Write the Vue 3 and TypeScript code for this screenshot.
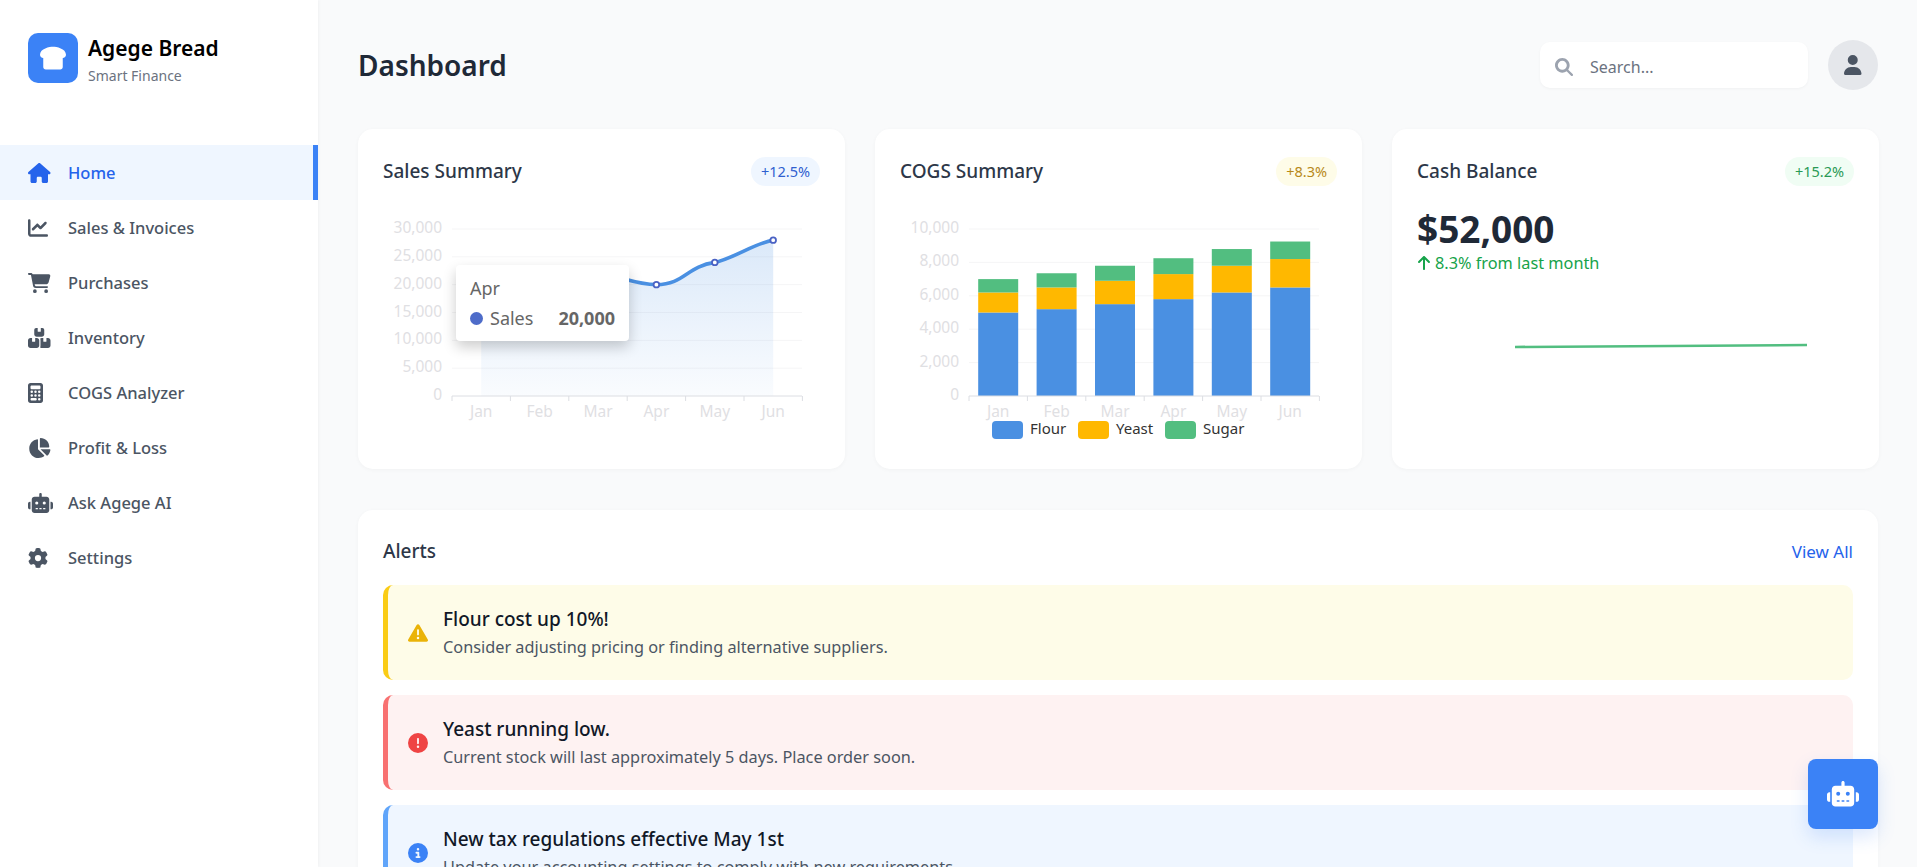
<script setup lang="ts">
const icons: Record<string, { w: number; d: string }> = {
  house: { w: 576, d: 'M575.8 255.5c0 18-15 32.1-32 32.1h-32l.7 160.2c0 2.7-.2 5.4-.5 8.1V472c0 22.1-17.9 40-40 40H456c-1.1 0-2.2 0-3.3-.1c-1.4 .1-2.8 .1-4.2 .1H416 392c-22.1 0-40-17.9-40-40V448 384c0-17.7-14.3-32-32-32H256c-17.7 0-32 14.3-32 32v64 24c0 22.1-17.9 40-40 40H160 128.1c-1.5 0-3-.1-4.5-.2c-1.2 .1-2.4 .2-3.6 .2H104c-22.1 0-40-17.9-40-40V360c0-.9 0-1.9 .1-2.8V287.6H32c-18 0-32-14-32-32.1c0-9 3-17 10-24L266.4 8c7-7 15-8 22-8s15 2 21 7L564.8 231.5c8 7 12 15 11 24z' },
  line: { w: 512, d: 'M64 64c0-17.7-14.3-32-32-32S0 46.3 0 64V400c0 44.2 35.8 80 80 80H480c17.7 0 32-14.3 32-32s-14.3-32-32-32H80c-8.8 0-16-7.2-16-16V64zm406.6 86.6c12.5-12.5 12.5-32.8 0-45.3s-32.8-12.5-45.3 0L320 210.7l-57.4-57.4c-12.5-12.5-32.8-12.5-45.3 0l-112 112c-12.5 12.5-12.5 32.8 0 45.3s32.8 12.5 45.3 0L240 221.3l57.4 57.4c12.5 12.5 32.8 12.5 45.3 0l128-128z' },
  cart: { w: 576, d: 'M0 24C0 10.7 10.7 0 24 0H69.5c22 0 41.5 12.8 50.6 32h411c26.3 0 45.5 25 38.6 50.4l-41 152.3c-8.5 31.4-37 53.3-69.5 53.3H170.7l5.4 28.5c2.2 11.3 12.1 19.5 23.6 19.5H488c13.3 0 24 10.7 24 24s-10.7 24-24 24H199.7c-34.6 0-64.3-24.6-70.7-58.5L77.4 54.5c-.7-3.8-4-6.5-7.9-6.5H24C10.7 48 0 37.3 0 24zM128 464a48 48 0 1 1 96 0 48 48 0 1 1 -96 0zm336-48a48 48 0 1 1 0 96 48 48 0 1 1 0-96z' },
  boxes: { w: 576, d: 'M248 0H208c-26.5 0-48 21.5-48 48V160c0 35.3 28.7 64 64 64H352c35.3 0 64-28.7 64-64V48c0-26.5-21.5-48-48-48H328V80c0 8.8-7.2 16-16 16H264c-8.8 0-16-7.2-16-16V0zM64 256c-35.3 0-64 28.7-64 64V448c0 35.3 28.7 64 64 64H224c35.3 0 64-28.7 64-64V320c0-35.3-28.7-64-64-64H184v80c0 8.8-7.2 16-16 16H120c-8.8 0-16-7.2-16-16V256H64zM352 512H512c35.3 0 64-28.7 64-64V320c0-35.3-28.7-64-64-64H472v80c0 8.8-7.2 16-16 16H408c-8.8 0-16-7.2-16-16V256H352c-15 0-28.8 5.1-39.7 13.8c4.9 15.4 7.7 31.9 7.7 50.2V448c0 18.3-2.8 34.8-7.7 50.2C323.2 506.9 337 512 352 512z' },
  calc: { w: 384, d: 'M64 0C28.7 0 0 28.7 0 64V448c0 35.3 28.7 64 64 64H320c35.3 0 64-28.7 64-64V64c0-35.3-28.7-64-64-64H64zM96 64H288c17.7 0 32 14.3 32 32v32c0 17.7-14.3 32-32 32H96c-17.7 0-32-14.3-32-32V96c0-17.7 14.3-32 32-32zm32 160a32 32 0 1 1 -64 0 32 32 0 1 1 64 0zM96 352a32 32 0 1 1 0-64 32 32 0 1 1 0 64zM64 416c0-17.7 14.3-32 32-32h96c17.7 0 32 14.3 32 32s-14.3 32-32 32H96c-17.7 0-32-14.3-32-32zM192 256a32 32 0 1 1 0-64 32 32 0 1 1 0 64zm32 64a32 32 0 1 1 -64 0 32 32 0 1 1 64 0zm64-64a32 32 0 1 1 0-64 32 32 0 1 1 0 64zm32 64a32 32 0 1 1 -64 0 32 32 0 1 1 64 0zM288 448a32 32 0 1 1 0-64 32 32 0 1 1 0 64z' },
  pie: { w: 576, d: 'M304 240V16.6c0-9 7-16.6 16-16.6C443.7 0 544 100.3 544 224c0 9-7.6 16-16.6 16H304zM32 272C32 150.7 122.1 50.3 239 34.3c9.2-1.3 17 6.1 17 15.4V288L412.5 444.5c6.7 6.7 6.2 17.7-1.5 23.1C371.8 495.6 323.8 512 272 512C139.5 512 32 404.6 32 272zm526.4 16c9.3 0 16.6 7.8 15.4 17c-7.7 55.9-34.6 105.6-73.9 142.3c-6 5.6-15.4 5.2-21.2-.7L320 288H558.4z' },
  robot: { w: 640, d: 'M320 0c17.7 0 32 14.3 32 32V96H472c39.8 0 72 32.2 72 72V440c0 39.8-32.2 72-72 72H168c-39.8 0-72-32.2-72-72V168c0-39.8 32.2-72 72-72H288V32c0-17.7 14.3-32 32-32zM208 384c-8.8 0-16 7.2-16 16s7.2 16 16 16h32c8.8 0 16-7.2 16-16s-7.2-16-16-16H208zm96 0c-8.8 0-16 7.2-16 16s7.2 16 16 16h32c8.8 0 16-7.2 16-16s-7.2-16-16-16H304zm96 0c-8.8 0-16 7.2-16 16s7.2 16 16 16h32c8.8 0 16-7.2 16-16s-7.2-16-16-16H400zM264 256a40 40 0 1 0 -80 0 40 40 0 1 0 80 0zm152 40a40 40 0 1 0 0-80 40 40 0 1 0 0 80zM48 224H64V416H48c-26.5 0-48-21.5-48-48V272c0-26.5 21.5-48 48-48zm544 0c26.5 0 48 21.5 48 48v96c0 26.5-21.5 48-48 48H576V224h16z' },
  gear: { w: 512, d: 'M495.9 166.6c3.2 8.7 .5 18.4-6.4 24.6l-43.3 39.4c1.1 8.3 1.7 16.8 1.7 25.4s-.6 17.1-1.7 25.4l43.3 39.4c6.9 6.2 9.6 15.9 6.4 24.6c-4.4 11.9-9.7 23.3-15.8 34.3l-4.7 8.1c-6.6 11-14 21.4-22.1 31.2c-5.9 7.2-15.7 9.6-24.5 6.8l-55.7-17.7c-13.4 10.3-28.2 18.9-44 25.4l-12.5 57.1c-2 9.1-9 16.3-18.2 17.8c-13.8 2.3-28 3.5-42.5 3.5s-28.7-1.2-42.5-3.5c-9.2-1.5-16.2-8.7-18.2-17.8l-12.5-57.1c-15.8-6.5-30.6-15.1-44-25.4L83.1 425.9c-8.8 2.8-18.6 .3-24.5-6.8c-8.1-9.8-15.5-20.2-22.1-31.2l-4.7-8.1c-6.1-11-11.4-22.4-15.8-34.3c-3.2-8.7-.5-18.4 6.4-24.6l43.3-39.4C64.6 273.1 64 264.6 64 256s.6-17.1 1.7-25.4L22.4 191.2c-6.9-6.2-9.6-15.9-6.4-24.6c4.4-11.9 9.7-23.3 15.8-34.3l4.7-8.1c6.6-11 14-21.4 22.1-31.2c5.9-7.2 15.7-9.6 24.5-6.8l55.7 17.7c13.4-10.3 28.2-18.9 44-25.4l12.5-57.1c2-9.1 9-16.3 18.2-17.8C227.3 1.2 241.5 0 256 0s28.7 1.2 42.5 3.5c9.2 1.5 16.2 8.7 18.2 17.8l12.5 57.1c15.8 6.5 30.6 15.1 44 25.4l55.7-17.7c8.8-2.8 18.6-.3 24.5 6.8c8.1 9.8 15.5 20.2 22.1 31.2l4.7 8.1c6.1 11 11.4 22.4 15.8 34.3zM256 336a80 80 0 1 0 0-160 80 80 0 1 0 0 160z' },
  search: { w: 512, d: 'M416 208c0 45.9-14.9 88.3-40 122.7L502.6 457.4c12.5 12.5 12.5 32.8 0 45.3s-32.8 12.5-45.3 0L330.7 376c-34.4 25.2-76.8 40-122.7 40C93.1 416 0 322.9 0 208S93.1 0 208 0S416 93.1 416 208zM208 336a128 128 0 1 0 0-256 128 128 0 1 0 0 256z' },
  user: { w: 448, d: 'M224 256A128 128 0 1 0 224 0a128 128 0 1 0 0 256zm-45.7 48C79.8 304 0 383.8 0 482.3C0 498.7 13.3 512 29.7 512H418.3c16.4 0 29.7-13.3 29.7-29.7C448 383.8 368.2 304 269.7 304H178.3z' },
  warn: { w: 512, d: 'M256 32c14.2 0 27.3 7.5 34.5 19.8l216 368c7.3 12.4 7.3 27.7 .2 40.1S486.3 480 472 480H40c-14.3 0-27.6-7.7-34.7-20.1s-7-27.8 .2-40.1l216-368C228.7 39.5 241.8 32 256 32zm0 128c-13.3 0-24 10.7-24 24V296c0 13.3 10.7 24 24 24s24-10.7 24-24V184c0-13.3-10.7-24-24-24zm32 224a32 32 0 1 0 -64 0 32 32 0 1 0 64 0z' },
  error: { w: 512, d: 'M256 512A256 256 0 1 0 256 0a256 256 0 1 0 0 512zm0-384c13.3 0 24 10.7 24 24V264c0 13.3-10.7 24-24 24s-24-10.7-24-24V152c0-13.3 10.7-24 24-24zM224 352a32 32 0 1 1 64 0 32 32 0 1 1 -64 0z' },
  info: { w: 512, d: 'M256 512A256 256 0 1 0 256 0a256 256 0 1 0 0 512zM216 336h24V272H216c-13.3 0-24-10.7-24-24s10.7-24 24-24h48c13.3 0 24 10.7 24 24v88h8c13.3 0 24 10.7 24 24s-10.7 24-24 24H216c-13.3 0-24-10.7-24-24s10.7-24 24-24zm40-208a32 32 0 1 1 0 64 32 32 0 1 1 0-64z' },
  up: { w: 384, d: 'M214.6 41.4c-12.5-12.5-32.8-12.5-45.3 0l-160 160c-12.5 12.5-12.5 32.8 0 45.3s32.8 12.5 45.3 0L160 141.2V448c0 17.7 14.3 32 32 32s32-14.3 32-32V141.2L329.4 246.6c12.5 12.5 32.8 12.5 45.3 0s12.5-32.8 0-45.3l-160-160z' },
  bread: { w: 512, d: 'M256 32C192 32 0 64 0 192c0 35.3 28.7 64 64 64V432c0 26.5 21.5 48 48 48H400c26.5 0 48-21.5 48-48V256c35.3 0 64-28.7 64-64C512 64 320 32 256 32z' }
}

const nav = [
  { label: 'Home', icon: 'house', active: true },
  { label: 'Sales & Invoices', icon: 'line' },
  { label: 'Purchases', icon: 'cart' },
  { label: 'Inventory', icon: 'boxes' },
  { label: 'COGS Analyzer', icon: 'calc' },
  { label: 'Profit & Loss', icon: 'pie' },
  { label: 'Ask Agege AI', icon: 'robot' },
  { label: 'Settings', icon: 'gear' }
]

const months = ['Jan', 'Feb', 'Mar', 'Apr', 'May', 'Jun']
const AXIS_BOTTOM = 196
const AXIS_HEIGHT = 167
const LEFT = 69
const STEP = 58.4
const yOf = (v: number, max: number) => AXIS_BOTTOM - (v / max) * AXIS_HEIGHT
const cx = (i: number) => LEFT + STEP * (i + 0.5)

const salesTicks = [0, 5000, 10000, 15000, 20000, 25000, 30000]
const cogsTicks = [0, 2000, 4000, 6000, 8000, 10000]
const ticksX = [0, 1, 2, 3, 4, 5, 6].map((i) => LEFT + STEP * i)

const salesValues = [15000, 18000, 22000, 20000, 24000, 28000]
const salesPoints = salesValues.slice(3).map((v, i) => ({ x: cx(i + 3), y: yOf(v, 30000) }))
const linePath =
  `M${cx(0)} ${yOf(15000, 30000)} C${cx(0) + 20} ${yOf(16000, 30000)} ${cx(1) - 20} ${yOf(17000, 30000)} ${cx(1)} ${yOf(18000, 30000)}` +
  ` S${cx(2) - 20} ${yOf(22000, 30000)} ${cx(2)} ${yOf(22000, 30000)}` +
  ` C${cx(2) + 20} ${yOf(21700, 30000)} ${cx(3) - 22} ${yOf(20000, 30000)} ${cx(3)} ${yOf(20000, 30000)}` +
  ` C${cx(3) + 28} ${yOf(20000, 30000)} ${cx(4) - 28} ${yOf(23300, 30000)} ${cx(4)} ${yOf(24000, 30000)}` +
  ` C${cx(4) + 20} ${yOf(24800, 30000)} ${cx(5) - 20} ${yOf(27300, 30000)} ${cx(5)} ${yOf(28000, 30000)}`
const areaPath = `${linePath} L${cx(5)} ${AXIS_BOTTOM} L${cx(0)} ${AXIS_BOTTOM} Z`

const cogs = [
  [5000, 1200, 800],
  [5200, 1300, 850],
  [5500, 1400, 900],
  [5800, 1500, 950],
  [6200, 1600, 1000],
  [6500, 1700, 1050]
]
const cogsColors = ['#4a90e2', '#ffb800', '#52be80']
const cogsBars = cogs.flatMap((row, i) => {
  let acc = 0
  return row.map((v, s) => {
    const y = yOf(acc + v, 10000)
    const h = (v / 10000) * AXIS_HEIGHT
    acc += v
    return { x: cx(i) - 20, y, h, fill: cogsColors[s] }
  })
})
const legend = [
  { label: 'Flour', sx: 92, tx: 130, fill: '#4a90e2' },
  { label: 'Yeast', sx: 178, tx: 216, fill: '#ffb800' },
  { label: 'Sugar', sx: 265, tx: 303, fill: '#52be80' }
]

const alerts = [
  { kind: 'warning', icon: 'warn', title: 'Flour cost up 10%!', text: 'Consider adjusting pricing or finding alternative suppliers.' },
  { kind: 'danger', icon: 'error', title: 'Yeast running low.', text: 'Current stock will last approximately 5 days. Place order soon.' },
  { kind: 'notice', icon: 'info', title: 'New tax regulations effective May 1st', text: 'Update your accounting settings to comply with new requirements.' }
]
</script>

<template>
  <div class="app">
    <aside class="sidebar">
      <div class="brand">
        <div class="logo">
          <svg class="bread" :viewBox="`0 0 ${icons.bread.w} 512`"><path :d="icons.bread.d" /></svg>
        </div>
        <div class="brand-text">
          <div class="brand-name">Agege Bread</div>
          <div class="brand-sub">Smart Finance</div>
        </div>
      </div>
      <nav class="nav">
        <a v-for="item in nav" :key="item.label" class="nav-item" :class="{ active: item.active }">
          <span class="nav-icon">
            <svg class="icon" :viewBox="`0 0 ${icons[item.icon].w} 512`" :width="(icons[item.icon].w / 512) * 20" height="20"><path :d="icons[item.icon].d" /></svg>
          </span>
          <span>{{ item.label }}</span>
        </a>
      </nav>
    </aside>

    <main class="main">
      <header class="topbar">
        <h1>Dashboard</h1>
        <div class="top-actions">
          <label class="search">
            <svg class="icon search-icon" viewBox="0 0 512 512" width="18" height="18"><path :d="icons.search.d" /></svg>
            <input type="text" placeholder="Search..." />
          </label>
          <div class="avatar">
            <svg class="icon" viewBox="0 0 448 512" width="17.5" height="20"><path :d="icons.user.d" /></svg>
          </div>
        </div>
      </header>

      <section class="cards">
        <article class="card">
          <div class="card-head">
            <h2>Sales Summary</h2>
            <span class="badge blue">+12.5%</span>
          </div>
          <div class="chart">
            <svg viewBox="0 0 437 244" width="437" height="244">
              <defs>
                <linearGradient id="areaFill" x1="0" y1="0" x2="0" y2="1">
                  <stop offset="0" stop-color="#4a90e2" stop-opacity="0.2" />
                  <stop offset="1" stop-color="#4a90e2" stop-opacity="0.03" />
                </linearGradient>
              </defs>
              <g v-for="t in salesTicks" :key="t">
                <line v-if="t" :x1="LEFT" :x2="LEFT + 350" :y1="yOf(t, 30000)" :y2="yOf(t, 30000)" class="grid" />
                <text :x="59" :y="yOf(t, 30000) + 4" class="tick" text-anchor="end">{{ t.toLocaleString('en-US') }}</text>
              </g>
              <path :d="areaPath" fill="url(#areaFill)" />
              <line :x1="LEFT" :x2="LEFT + 350" :y1="AXIS_BOTTOM" :y2="AXIS_BOTTOM" class="axis" />
              <line v-for="x in ticksX" :key="x" :x1="x" :x2="x" :y1="AXIS_BOTTOM" :y2="AXIS_BOTTOM + 5" class="axis" />
              <text v-for="(m, i) in months" :key="m" :x="cx(i)" y="217" class="tick" text-anchor="middle">{{ m }}</text>
              <path :d="linePath" fill="none" stroke="#4a90e2" stroke-width="3.6" />
              <circle v-for="p in salesPoints" :key="p.x" :cx="p.x" :cy="p.y" r="2.8" fill="#fff" stroke="#4a62c4" stroke-width="1.8" />
            </svg>
            <div class="tooltip">
              <div class="tip-title">Apr</div>
              <div class="tip-row">
                <i class="tip-dot"></i>
                <span class="tip-name">Sales</span>
                <b>20,000</b>
              </div>
            </div>
          </div>
        </article>

        <article class="card">
          <div class="card-head">
            <h2>COGS Summary</h2>
            <span class="badge amber">+8.3%</span>
          </div>
          <div class="chart">
            <svg viewBox="0 0 437 244" width="437" height="244">
              <g v-for="t in cogsTicks" :key="t">
                <line v-if="t" :x1="LEFT" :x2="LEFT + 350" :y1="yOf(t, 10000)" :y2="yOf(t, 10000)" class="grid" />
                <text :x="59" :y="yOf(t, 10000) + 4" class="tick" text-anchor="end">{{ t.toLocaleString('en-US') }}</text>
              </g>
              <rect v-for="(b, i) in cogsBars" :key="i" :x="b.x" :y="b.y" width="40" :height="b.h" :fill="b.fill" />
              <line :x1="LEFT" :x2="LEFT + 350" :y1="AXIS_BOTTOM" :y2="AXIS_BOTTOM" class="axis" />
              <line v-for="x in ticksX" :key="x" :x1="x" :x2="x" :y1="AXIS_BOTTOM" :y2="AXIS_BOTTOM + 5" class="axis" />
              <text v-for="(m, i) in months" :key="m" :x="cx(i)" y="217" class="tick" text-anchor="middle">{{ m }}</text>
              <g v-for="l in legend" :key="l.label">
                <rect :x="l.sx" y="221" width="31" height="18" rx="4" :fill="l.fill" />
                <text :x="l.tx" y="234" class="legend">{{ l.label }}</text>
              </g>
            </svg>
          </div>
        </article>

        <article class="card">
          <div class="card-head">
            <h2>Cash Balance</h2>
            <span class="badge green">+15.2%</span>
          </div>
          <div class="cash-value">$52,000</div>
          <div class="cash-delta">
            <svg class="icon" viewBox="0 0 384 512" width="14" height="16"><path :d="icons.up.d" /></svg>
            <span>8.3% from last month</span>
          </div>
          <svg class="spark" viewBox="0 0 437 12" width="437" height="12">
            <line x1="98" y1="7" x2="390" y2="5" stroke="#52be80" stroke-width="2.6" />
          </svg>
        </article>
      </section>

      <section class="alerts-card">
        <div class="alerts-head">
          <h2>Alerts</h2>
          <a class="view-all">View All</a>
        </div>
        <div class="alert-list">
          <div v-for="a in alerts" :key="a.title" class="alert" :class="a.kind">
            <svg class="icon alert-icon" viewBox="0 0 512 512" width="20" height="20"><path :d="icons[a.icon].d" /></svg>
            <div>
              <div class="alert-title">{{ a.title }}</div>
              <div class="alert-text">{{ a.text }}</div>
            </div>
          </div>
        </div>
      </section>
    </main>

    <button class="fab" aria-label="Ask Agege AI">
      <svg class="icon" viewBox="0 0 640 512" width="32" height="25.6"><path :d="icons.robot.d" /></svg>
    </button>
  </div>
</template>

<style>
html, body { margin: 0; height: 100%; overflow: hidden; background: #f9fafb; }
</style>

<style scoped>
* { box-sizing: border-box; }
.app {
  display: flex;
  height: 867px;
  overflow: hidden;
  background: #f9fafb;
  font-family: "Noto Sans", "Open Sans", sans-serif;
  color: #1f2937;
}
.icon { fill: currentColor; display: block; }

.sidebar {
  flex: 0 0 318px;
  background: #fff;
  box-shadow: 1px 0 3px rgba(0, 0, 0, 0.04);
  padding-top: 33px;
  z-index: 1;
}
.brand { display: flex; align-items: center; gap: 10px; padding-left: 28px; height: 50px; }
.logo {
  width: 50px; height: 50px; border-radius: 10px; background: #3b82f6;
  display: flex; align-items: center; justify-content: center; color: #fff;
}
.bread { width: 26px; height: 26px; fill: #fff; }
.brand-text { margin-top: 6px; }
.brand-name { font-size: 21px; font-weight: 600; color: #000; line-height: 30px; }
.brand-sub { font-size: 14px; color: #6b7280; line-height: 26px; }
.nav { margin-top: 62px; }
.nav-item {
  display: flex; align-items: center; height: 55px; padding-left: 28px;
  font-size: 16.5px; font-weight: 500; color: #4b5563;
}
.nav-icon { width: 40px; flex: none; }
.nav-item.active { background: #eff6ff; color: #2563eb; border-right: 5px solid #3b82f6; }

.main { flex: 1; min-width: 0; padding: 40px 39px 0 40px; overflow: hidden; }
.topbar { display: flex; align-items: center; justify-content: space-between; height: 50px; margin-bottom: 39px; }
h1 { margin: 0; font-size: 28px; font-weight: 600; color: #1f2937; }
.top-actions { display: flex; align-items: center; gap: 20px; }
.search {
  display: flex; align-items: center; gap: 17px; width: 268px; height: 46px; padding: 3px 0 0 15px;
  background: #fff; border-radius: 10px; box-shadow: 0 1px 3px rgba(0, 0, 0, 0.04); color: #9ca3af;
}
.search input {
  border: 0; outline: 0; background: transparent; flex: 1; min-width: 0;
  font: 16px "Noto Sans", sans-serif; color: #374151; padding: 0;
}
.search input::placeholder { color: #6b7280; opacity: 1; }
.avatar {
  width: 50px; height: 50px; border-radius: 50%; background: #e5e7eb; color: #4b5563;
  display: flex; align-items: center; justify-content: center;
}

.cards { display: grid; grid-template-columns: repeat(3, 1fr); gap: 30px; margin-bottom: 41px; }
.card, .alerts-card {
  background: #fff; border-radius: 15px; box-shadow: 0 1px 4px rgba(0, 0, 0, 0.035); padding: 25px;
}
.card { height: 340px; }
.card-head { display: flex; align-items: center; justify-content: space-between; height: 34px; }
h2 { margin: 0; font-size: 19px; font-weight: 500; color: #2d3748; }
.badge { height: 29px; line-height: 29px; padding: 0 10px; border-radius: 15px; font-size: 14.5px; }
.badge.blue { background: #eff6ff; color: #2f5fd0; }
.badge.amber { background: #fefce8; color: #b88a1a; }
.badge.green { background: #f0fdf4; color: #2a9a55; }

.chart { position: relative; margin-top: 12px; height: 244px; }
.chart svg { display: block; }
.grid { stroke: #f5f5f6; stroke-width: 1; }
.axis { stroke: #dcdee3; stroke-width: 1; }
.tick { font-size: 15.5px; fill: #dfe0e3; font-family: "Noto Sans", sans-serif; }
.legend { font-size: 15px; fill: #333; font-family: "Noto Sans", sans-serif; }

.tooltip {
  position: absolute; left: 73px; top: 65px; width: 173px; height: 76px; padding: 10px 14px;
  background: #fff; border-radius: 4px; box-shadow: 0 6px 14px rgba(0, 0, 0, 0.2); color: #666; font-size: 18px; line-height: 27px;
}
.tip-row { display: flex; align-items: center; margin-top: 3px; }
.tip-dot { width: 13px; height: 13px; border-radius: 50%; background: #4e6cc9; margin-right: 7px; }
.tip-name { flex: 1; }
.tip-row b { font-weight: 700; }

.cash-value { margin-top: 19px; font-size: 37px; line-height: 44px; font-weight: 700; color: #1f2937; }
.cash-delta { display: flex; align-items: center; gap: 4px; margin-top: 1px; height: 22px; color: #16a34a; font-size: 16.3px; }
.spark { display: block; margin-top: 66px; }

.alerts-head { display: flex; align-items: center; justify-content: space-between; height: 32px; margin-bottom: 18px; }
.view-all { font-size: 17px; color: #2563eb; }
.alert-list { display: flex; flex-direction: column; gap: 15px; }
.alert {
  display: flex; align-items: center; gap: 15px; height: 95px; padding-left: 20px;
  border-radius: 10px; border-left: 5px solid;
}
.alert-icon { flex: none; }
.alert.warning { background: #fefce8; border-color: #facc15; }
.alert.warning .alert-icon { color: #eab308; }
.alert.danger { background: #fef2f2; border-color: #f87171; }
.alert.danger .alert-icon { color: #ef4444; }
.alert.notice { background: #eff6ff; border-color: #60a5fa; }
.alert.notice .alert-icon { color: #3b82f6; }
.alert-title { font-size: 19px; font-weight: 500; color: #111827; line-height: 28px; }
.alert-text { font-size: 16.3px; color: #4b5563; line-height: 28px; }

.fab {
  position: fixed; right: 39px; bottom: 38px; width: 70px; height: 70px; border: 0; border-radius: 8px;
  background: #3b82f6; color: #fff; display: flex; align-items: center; justify-content: center; padding: 0;
  box-shadow: 0 8px 18px rgba(59, 130, 246, 0.18);
}
</style>
